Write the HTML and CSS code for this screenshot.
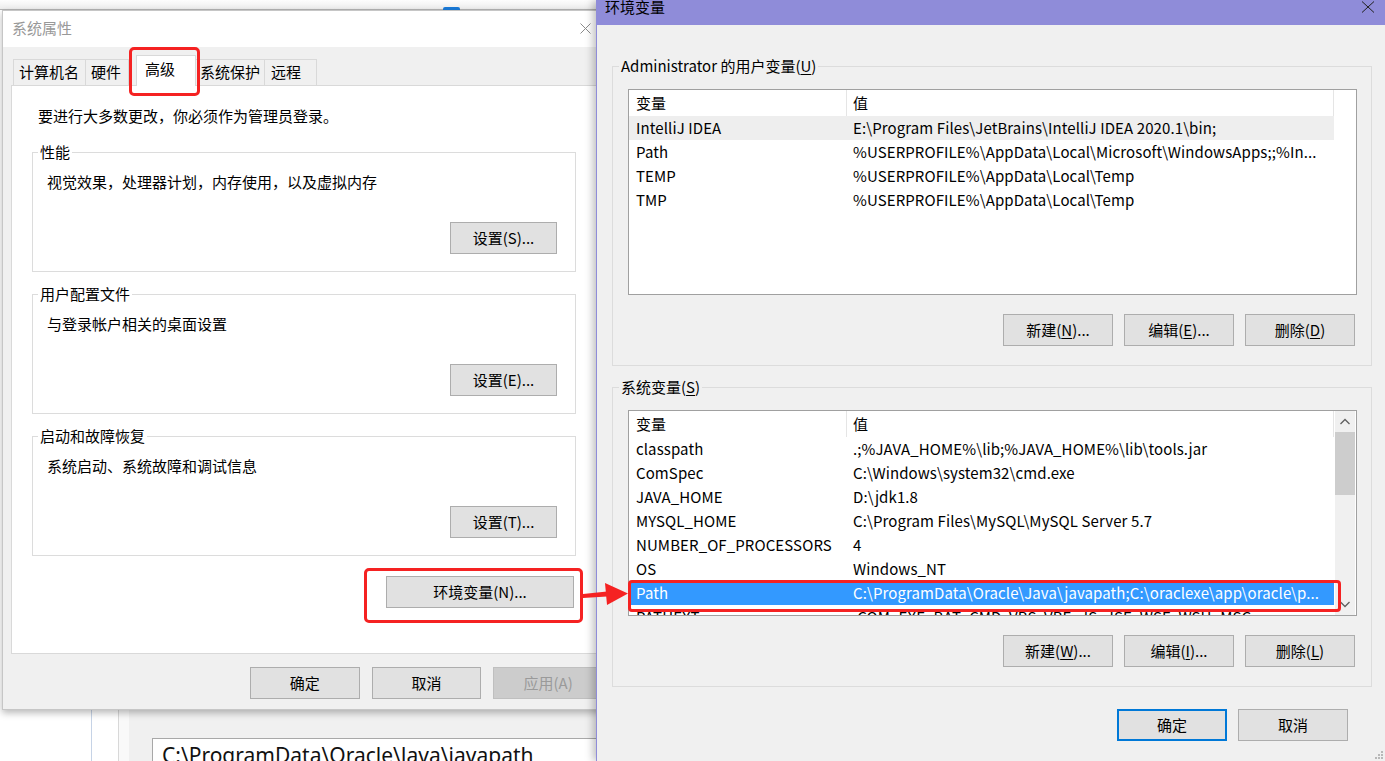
FILE: index.html
```html
<!DOCTYPE html>
<html lang="zh-CN">
<head>
    <meta charset="UTF-8">
    <title>系统属性 - 环境变量</title>
    <link rel="stylesheet" href="styles.css">
</head>
<body>
<div class="desktop">

    <!-- windows behind the dialogs -->
    <div class="backdrop-top"><span class="backdrop-tab"></span></div>
    <div class="backdrop-window">
        <div class="bw-side"></div>
        <div class="bw-line bw-line-blue"></div>
        <div class="bw-gap"></div>
        <div class="bw-line"></div>
        <div class="bw-pale"></div>
        <div class="bw-main">
            <div class="bw-input">C:\ProgramData\Oracle\Java\javapath</div>
        </div>
    </div>

    <!-- 系统属性 -->
    <div class="sys-dialog">
        <div class="sys-title">
            <span>系统属性</span>
            <svg class="sys-close" width="11" height="11" viewBox="0 0 11 11"><path d="M0.5 0.5 L10.5 10.5 M10.5 0.5 L0.5 10.5" stroke="#8a8a8a" stroke-width="1"/></svg>
        </div>
        <div class="sys-body">
            <div class="tabs">
                <div class="tab tab-name">计算机名</div>
                <div class="tab tab-hw">硬件</div>
                <div class="tab tab-adv active">高级</div>
                <div class="tab tab-prot">系统保护</div>
                <div class="tab tab-remote">远程</div>
            </div>
            <div class="tab-panel">
                <div class="intro">要进行大多数更改，你必须作为管理员登录。</div>

                <fieldset class="group">
                    <legend>性能</legend>
                    <div class="group-text">视觉效果，处理器计划，内存使用，以及虚拟内存</div>
                    <div class="group-actions"><button class="btn btn-set">设置(S)...</button></div>
                </fieldset>

                <fieldset class="group">
                    <legend>用户配置文件</legend>
                    <div class="group-text">与登录帐户相关的桌面设置</div>
                    <div class="group-actions"><button class="btn btn-set">设置(E)...</button></div>
                </fieldset>

                <fieldset class="group group-last">
                    <legend>启动和故障恢复</legend>
                    <div class="group-text">系统启动、系统故障和调试信息</div>
                    <div class="group-actions"><button class="btn btn-set">设置(T)...</button></div>
                </fieldset>

                <div class="env-row"><button class="btn btn-env">环境变量(N)...</button></div>
            </div>
            <div class="sys-footer">
                <button class="btn">确定</button>
                <button class="btn">取消</button>
                <button class="btn btn-disabled">应用(A)</button>
            </div>
        </div>
    </div>

    <!-- 环境变量 -->
    <div class="env-dialog">
        <div class="env-title">
            <span class="env-title-text">环境变量</span>
            <svg class="env-close" width="14" height="12" viewBox="0 0 14 12"><path d="M1 0.5 L13 11.5 M13 0.5 L1 11.5" stroke="#222" stroke-width="1"/></svg>
        </div>
        <div class="env-body">
            <fieldset class="env-group">
                <legend>Administrator 的用户变量(<u>U</u>)</legend>
                <div class="list">
                    <div class="list-main">
                        <div class="list-head">
                            <div class="cell cell-name">变量</div>
                            <div class="cell cell-value">值</div>
                        </div>
                        <div class="list-row row-inactive">
                            <div class="cell cell-name">IntelliJ IDEA</div>
                            <div class="cell cell-value">E:\Program Files\JetBrains\IntelliJ IDEA 2020.1\bin;</div>
                        </div>
                        <div class="list-row">
                            <div class="cell cell-name">Path</div>
                            <div class="cell cell-value">%USERPROFILE%\AppData\Local\Microsoft\WindowsApps;;%In...</div>
                        </div>
                        <div class="list-row">
                            <div class="cell cell-name">TEMP</div>
                            <div class="cell cell-value">%USERPROFILE%\AppData\Local\Temp</div>
                        </div>
                        <div class="list-row">
                            <div class="cell cell-name">TMP</div>
                            <div class="cell cell-value">%USERPROFILE%\AppData\Local\Temp</div>
                        </div>
                    </div>
                </div>
                <div class="env-actions">
                    <button class="btn">新建(<u>N</u>)...</button>
                    <button class="btn">编辑(<u>E</u>)...</button>
                    <button class="btn">删除(<u>D</u>)</button>
                </div>
            </fieldset>

            <fieldset class="env-group env-group-sys">
                <legend>系统变量(<u>S</u>)</legend>
                <div class="list">
                    <div class="list-main">
                        <div class="list-head">
                            <div class="cell cell-name">变量</div>
                            <div class="cell cell-value">值</div>
                        </div>
                        <div class="list-row">
                            <div class="cell cell-name">classpath</div>
                            <div class="cell cell-value">.;%JAVA_HOME%\lib;%JAVA_HOME%\lib\tools.jar</div>
                        </div>
                        <div class="list-row">
                            <div class="cell cell-name">ComSpec</div>
                            <div class="cell cell-value">C:\Windows\system32\cmd.exe</div>
                        </div>
                        <div class="list-row">
                            <div class="cell cell-name">JAVA_HOME</div>
                            <div class="cell cell-value">D:\jdk1.8</div>
                        </div>
                        <div class="list-row">
                            <div class="cell cell-name">MYSQL_HOME</div>
                            <div class="cell cell-value">C:\Program Files\MySQL\MySQL Server 5.7</div>
                        </div>
                        <div class="list-row">
                            <div class="cell cell-name">NUMBER_OF_PROCESSORS</div>
                            <div class="cell cell-value">4</div>
                        </div>
                        <div class="list-row">
                            <div class="cell cell-name">OS</div>
                            <div class="cell cell-value">Windows_NT</div>
                        </div>
                        <div class="list-row row-selected">
                            <div class="cell cell-name">Path</div>
                            <div class="cell cell-value">C:\ProgramData\Oracle\Java\javapath;C:\oraclexe\app\oracle\p...</div>
                        </div>
                        <div class="list-row">
                            <div class="cell cell-name">PATHEXT</div>
                            <div class="cell cell-value">.COM;.EXE;.BAT;.CMD;.VBS;.VBE;.JS;.JSE;.WSF;.WSH;.MSC</div>
                        </div>
                    </div>
                    <div class="scrollbar">
                        <svg class="scroll-arrow" width="20" height="21" viewBox="0 0 20 21"><path d="M5.5 13 L10 8.5 L14.5 13" fill="none" stroke="#606060" stroke-width="1.3"/></svg>
                        <div class="scroll-thumb"></div>
                        <div class="scroll-track"></div>
                        <svg class="scroll-arrow" width="20" height="21" viewBox="0 0 20 21"><path d="M5.5 8 L10 12.5 L14.5 8" fill="none" stroke="#606060" stroke-width="1.3"/></svg>
                    </div>
                </div>
                <div class="env-actions">
                    <button class="btn">新建(<u>W</u>)...</button>
                    <button class="btn">编辑(<u>I</u>)...</button>
                    <button class="btn">删除(<u>L</u>)</button>
                </div>
            </fieldset>

            <div class="env-footer">
                <button class="btn btn-default">确定</button>
                <button class="btn">取消</button>
            </div>
        </div>
        <svg class="grip" width="10" height="10" viewBox="0 0 10 10">
            <rect x="7" y="1" width="2" height="2" fill="#b8b8b8"/>
            <rect x="4" y="4" width="2" height="2" fill="#b8b8b8"/>
            <rect x="7" y="4" width="2" height="2" fill="#b8b8b8"/>
            <rect x="1" y="7" width="2" height="2" fill="#b8b8b8"/>
            <rect x="4" y="7" width="2" height="2" fill="#b8b8b8"/>
            <rect x="7" y="7" width="2" height="2" fill="#b8b8b8"/>
        </svg>
    </div>

    <!-- red annotations -->
    <div class="mark mark-tab"></div>
    <div class="mark mark-envbtn"></div>
    <div class="mark mark-path"></div>
    <svg class="arrow" width="50" height="30" viewBox="0 0 50 30">
        <polygon points="3,14 27,11.5 27,16.5 3,18" fill="#f52222"/>
        <polygon points="25,3 48,13.5 27,25" fill="#f52222"/>
    </svg>

</div>
</body>
</html>
```

FILE: styles.css
```css
* {
    box-sizing: border-box;
    margin: 0;
    padding: 0;
}

body {
    font-family: "Noto Sans CJK SC", "Noto Sans", sans-serif;
    font-size: 15px;
    color: #000;
    background-color: #ffffff;
}

.desktop {
    position: relative;
    width: 1385px;
    height: 761px;
    overflow: hidden;
    background-color: #ffffff;
}

/* ---------- background windows ---------- */

.backdrop-top {
    position: absolute;
    left: 0;
    top: 0;
    width: 600px;
    height: 10px;
    background: linear-gradient(#fdfdfd, #ededed);
    border-bottom: 1px solid #b4b4b4;
}

.backdrop-tab {
    position: absolute;
    left: 443px;
    bottom: -1px;
    width: 17px;
    height: 3px;
    background-color: #1a7ad8;
    border-radius: 2px 2px 0 0;
}

.backdrop-window {
    position: absolute;
    left: 0;
    top: 700px;
    width: 1385px;
    height: 61px;
    display: flex;
}

.bw-side {
    width: 91px;
    background-color: #ffffff;
}

.bw-line {
    width: 1px;
    background-color: #d8d8d8;
}

.bw-line-blue {
    background-color: #c6d3e6;
}

.bw-gap {
    width: 26px;
    background-color: #ffffff;
}

.bw-pale {
    width: 10px;
    background-color: #f9f9f9;
}

.bw-main {
    flex: 1;
    background-color: #f0f0f0;
    padding: 38px 0 0 23px;
}

.bw-input {
    width: 470px;
    height: 40px;
    background-color: #ffffff;
    border: 1px solid #a8a8a8;
    padding: 2px 0 0 9px;
    font-family: "Noto Sans", sans-serif;
    font-size: 21px;
    line-height: 28px;
    color: #111;
    white-space: nowrap;
    overflow: hidden;
}

/* ---------- shared controls ---------- */

.btn {
    font-family: inherit;
    font-size: 15px;
    height: 32px;
    line-height: 30px;
    width: 110px;
    background-color: #e1e1e1;
    border: 1px solid #adadad;
    color: #000;
    text-align: center;
    white-space: nowrap;
}

.btn u {
    text-decoration-thickness: 1px;
    text-underline-offset: 2px;
}

.btn-disabled {
    background-color: #cccccc;
    border-color: #bfbfbf;
    color: #9a9a9a;
}

.btn-default {
    border: 2px solid #0078d7;
    line-height: 28px;
}

/* ---------- 系统属性 ---------- */

.sys-dialog {
    position: absolute;
    left: 2px;
    top: 10px;
    width: 610px;
    height: 700px;
    background-color: #f0f0f0;
    border: 1px solid #c6c6c6;
    box-shadow: 0 3px 7px rgba(0, 0, 0, 0.28);
}

.sys-title {
    height: 36px;
    background-color: #ffffff;
    display: flex;
    align-items: center;
    justify-content: space-between;
    padding: 0 20px 2px 9px;
    color: #999999;
    line-height: 34px;
}

.sys-close {
    display: block;
}

.sys-body {
    padding: 0 8px;
}

.tabs {
    display: flex;
    align-items: flex-end;
    height: 26px;
    margin-top: 12px;
    padding-left: 2px;
    position: relative;
    z-index: 1;
}

.tab {
    height: 26px;
    line-height: 24px;
    border: 1px solid #d9d9d9;
    border-bottom: none;
    background-color: #f0f0f0;
    white-space: nowrap;
    margin-left: -1px;
}

.tab-name {
    margin-left: 0;
    width: 73px;
    padding-left: 5px;
}

.tab-hw {
    width: 44px;
    padding-left: 5px;
}

.tab-adv {
    margin-left: 7px;
    width: 60px;
    padding-left: 8px;
}

.tab-prot {
    width: 70px;
    padding-left: 4px;
}

.tab-remote {
    width: 53px;
    padding-left: 6px;
}

.tab.active {
    height: 31px;
    line-height: 26px;
    background-color: #ffffff;
    margin-bottom: -1px;
}

.tab-panel {
    width: 586px;
    height: 569px;
    background-color: #ffffff;
    border: 1px solid #d9d9d9;
    padding: 20px 20px 0 20px;
}

.intro {
    padding-left: 6px;
    line-height: 20px;
}

.group {
    border: 1px solid #dcdcdc;
    padding: 0 18px 17px 14px;
    margin-top: 12px;
    min-width: 0;
}

.intro + .group {
    margin-top: 16px;
}

.group legend {
    line-height: 20px;
    padding: 0 2px;
    margin-left: -9px;
}

.group-text {
    margin-top: 10px;
    line-height: 20px;
}

.group-actions {
    margin-top: 30px;
    display: flex;
    justify-content: flex-end;
}

.btn-set {
    width: 107px;
}

.env-row {
    margin-top: 20px;
    display: flex;
    justify-content: flex-end;
    padding-right: 2px;
}

.btn-env {
    width: 188px;
}

.sys-footer {
    display: flex;
    gap: 12px;
    margin-top: 13px;
    padding-left: 239px;
}

/* ---------- 环境变量 ---------- */

.env-dialog {
    position: absolute;
    left: 596px;
    top: 0;
    width: 789px;
    height: 761px;
    background-color: #f0f0f0;
    border-left: 1px solid #8f8cd9;
    box-shadow: -3px 0 8px rgba(0, 0, 0, 0.25);
}

.env-title {
    height: 25px;
    background-color: #8f8cd9;
    display: flex;
    justify-content: space-between;
    align-items: flex-start;
    padding: 0 10px 0 8px;
}

.env-title-text {
    line-height: 14px;
}

.env-close {
    display: block;
    margin-top: 1px;
}

.env-body {
    padding: 31px 13px 0 15px;
}

.env-group {
    border: 1px solid #dcdcdc;
    padding: 0 14px 19px 15px;
    min-width: 0;
}

.env-group legend {
    line-height: 20px;
    padding: 0 2px;
    margin-left: -9px;
}

.env-group legend u {
    text-underline-offset: 2px;
}

.env-group-sys {
    margin-top: 11px;
}

.list {
    margin-top: 13px;
    height: 206px;
    background-color: #ffffff;
    border: 1px solid #a0a0a0;
    display: flex;
    overflow: hidden;
}

.list-main {
    width: 705px;
    overflow: hidden;
}

.list-head {
    display: flex;
    height: 26px;
    line-height: 26px;
}

.list-head .cell {
    border-right: 1px solid #e5e5e5;
}

.list-row {
    display: flex;
    height: 24px;
    line-height: 24px;
}

.cell {
    white-space: nowrap;
    overflow: hidden;
    letter-spacing: 0.1px;
}

.cell-name {
    width: 218px;
    padding-left: 7px;
}

.cell-value {
    width: 487px;
    padding-left: 6px;
}

.row-inactive {
    background-color: #eeeeee;
}

.row-selected {
    background-color: #3399ff;
    color: #ffffff;
}

.scrollbar {
    width: 20px;
    margin-left: 1px;
    background-color: #f0f0f0;
    display: flex;
    flex-direction: column;
}

.scroll-arrow {
    display: block;
    flex: none;
}

.scroll-thumb {
    height: 63px;
    background-color: #cdcdcd;
    flex: none;
}

.scroll-track {
    flex: 1;
}

.env-actions {
    display: flex;
    justify-content: flex-end;
    gap: 11px;
    margin-top: 19px;
    padding-right: 2px;
}

.env-footer {
    display: flex;
    justify-content: flex-end;
    gap: 11px;
    margin-top: 22px;
    padding-right: 24px;
}

.grip {
    position: absolute;
    right: 1px;
    bottom: 1px;
}

/* ---------- red annotations ---------- */

.mark {
    position: absolute;
    border: 3px solid #f52222;
    border-radius: 5px;
    z-index: 5;
}

.mark-tab {
    left: 129px;
    top: 47px;
    width: 71px;
    height: 49px;
}

.mark-envbtn {
    left: 364px;
    top: 568px;
    width: 219px;
    height: 55px;
}

.mark-path {
    left: 628px;
    top: 580px;
    width: 713px;
    height: 32px;
    border-radius: 4px;
}

.arrow {
    position: absolute;
    left: 580px;
    top: 580px;
    z-index: 6;
}
```
